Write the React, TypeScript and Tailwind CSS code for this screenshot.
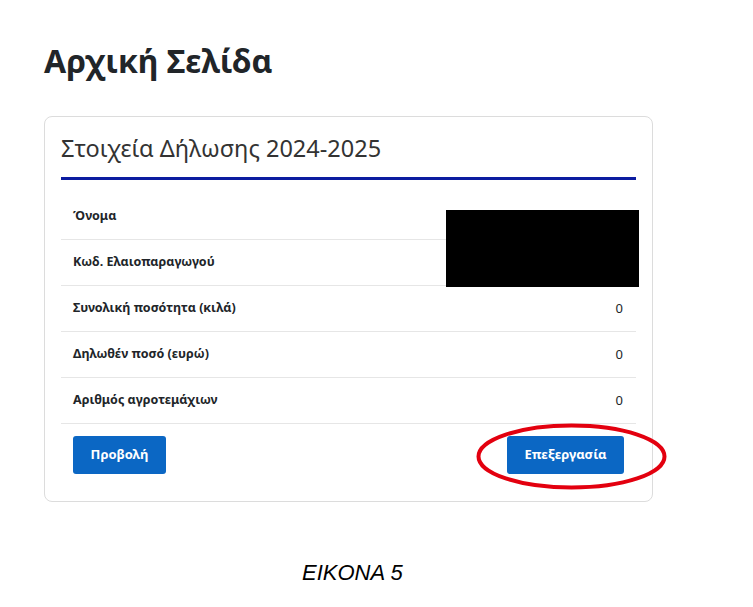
const rows = [
  { label: "Όνομα", value: "" },
  { label: "Κωδ. Ελαιοπαραγωγού", value: "" },
  { label: "Συνολική ποσότητα (κιλά)", value: "0" },
  { label: "Δηλωθέν ποσό (ευρώ)", value: "0" },
  { label: "Αριθμός αγροτεμάχιων", value: "0" },
];

export default function App() {
  return (
    <div className="min-h-[607px] bg-white pl-[44px] pt-[41px] font-['Noto_Sans',sans-serif]">
      <h1 className="text-[32px] font-bold leading-[40px] text-[#212529]">Αρχική Σελίδα</h1>

      <div className="relative mt-[35px] w-[609px] rounded-lg border border-[#dcdcdc] px-[16px] pb-[27px] pt-[15px]">
        <h2 className="text-[23.5px] font-normal leading-[32px] text-[#333]">Στοιχεία Δήλωσης 2024-2025</h2>
        <div className="mt-[13px] h-[3px] bg-[#0c1ca0]" />

        <div className="mt-[14px]">
          {rows.map((row) => (
            <div
              key={row.label}
              className="flex h-[46px] items-center justify-between border-b border-[#e6e6e6] pl-[12px] pr-[13px] text-[12.5px]"
            >
              <span className="font-bold text-[#212529]">{row.label}</span>
              <span className="text-[13px] text-[#212529]">{row.value}</span>
            </div>
          ))}
        </div>

        <div className="mt-[12px] flex items-center justify-between px-[12px]">
          <button className="h-[38px] w-[93px] rounded-[3px] bg-[#0b67c4] text-[13px] font-bold text-white">
            Προβολή
          </button>
          <div className="relative">
            <button className="h-[38px] w-[117px] rounded-[3px] bg-[#0b67c4] text-[13px] font-bold text-white">
              Επεξεργασία
            </button>
            <svg
              className="pointer-events-none absolute left-[-31px] top-[-13px]"
              width="191"
              height="67"
              viewBox="0 0 191 67"
            >
              <ellipse cx="95.5" cy="33.5" rx="93" ry="31" fill="none" stroke="#e3000f" strokeWidth="4" />
            </svg>
          </div>
        </div>

        {/* redacted values */}
        <div className="absolute left-[401px] top-[93px] h-[77px] w-[193px] bg-black" />
      </div>

      <p className="ml-[258px] mt-[58px] font-['Liberation_Sans',sans-serif] text-[22px] italic leading-[26px] text-black">
        EIKONA 5
      </p>
    </div>
  );
}
